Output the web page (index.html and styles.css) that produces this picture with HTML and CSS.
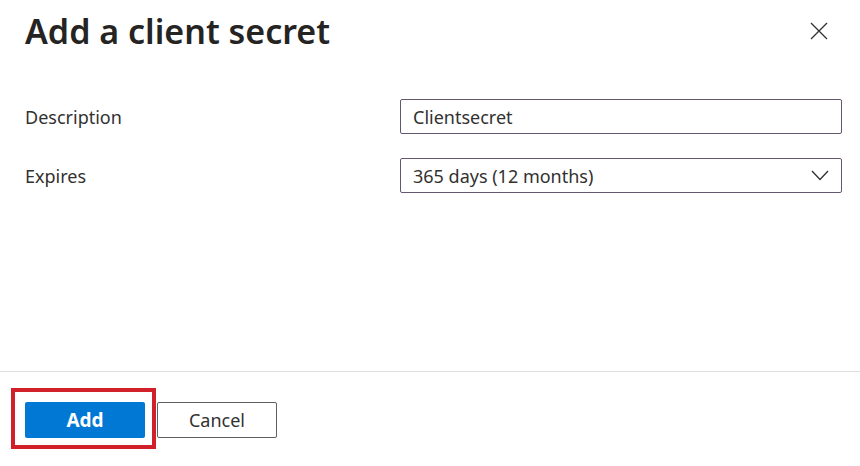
FILE: index.html
```html
<!DOCTYPE html>
<html lang="en">
<head>
  <meta charset="UTF-8">
  <title>Add a client secret</title>
  <link rel="stylesheet" href="styles.css">
</head>
<body>
  <div class="panel">
    <div class="panel-header">
      <h1>Add a client secret</h1>
      <button class="close-btn" aria-label="Close">
        <svg width="18" height="18" viewBox="0 0 18 18">
          <path d="M1 1 L17 17 M17 1 L1 17" stroke="#323130" stroke-width="1.3" fill="none"/>
        </svg>
      </button>
    </div>

    <div class="form">
      <label class="form-label" for="desc">Description</label>
      <input type="text" id="desc" class="field" value="Clientsecret">

      <label class="form-label" for="expires">Expires</label>
      <div class="field select">
        <span>365 days (12 months)</span>
        <svg width="18" height="11" viewBox="0 0 18 11">
          <path d="M1 1 L9 9.5 L17 1" stroke="#323130" stroke-width="1.3" fill="none"/>
        </svg>
      </div>
    </div>

    <div class="panel-footer">
      <div class="highlight">
        <button class="btn btn-primary">Add</button>
      </div>
      <button class="btn btn-default">Cancel</button>
    </div>
  </div>
</body>
</html>
```

FILE: styles.css
```css
:root {
  --text: #323130;
  --accent: #0078d4;
  --field-border: #65576f;
  --divider: #e1dfdd;
}

* {
  box-sizing: border-box;
}

body {
  margin: 0;
  background: #fff;
  color: var(--text);
  font-family: "Noto Sans", "Open Sans", sans-serif;
}

.panel {
  width: 860px;
  height: 466px;
  display: flex;
  flex-direction: column;
}

.panel-header {
  display: flex;
  align-items: center;
  justify-content: space-between;
  padding: 6px 25px 0 25px;
  height: 56px;
}

h1 {
  margin: 0;
  font-size: 34px;
  font-weight: 600;
  color: #252423;
}

.close-btn {
  background: none;
  border: none;
  padding: 0;
  margin-right: 7px;
  margin-top: 0;
  width: 18px;
  height: 18px;
  cursor: pointer;
}

.close-btn svg {
  display: block;
}

.form {
  display: grid;
  grid-template-columns: 375px 442px;
  grid-auto-rows: 35px;
  row-gap: 24px;
  align-items: center;
  padding: 43px 25px 0 25px;
  flex: 1;
  align-content: start;
}

.form-label {
  font-size: 18px;
}

.field {
  height: 35px;
  width: 100%;
  border: 1px solid var(--field-border);
  border-radius: 2px;
  padding: 0 12px;
  font-family: inherit;
  font-size: 18px;
  color: var(--text);
  background: #fff;
}

.select {
  display: flex;
  align-items: center;
  justify-content: space-between;
}

.select svg {
  display: block;
}

.panel-footer {
  border-top: 1px solid var(--divider);
  display: flex;
  align-items: flex-start;
  padding: 16px 0 17px 11px;
}

.highlight {
  border: 4px solid #d0202a;
  padding: 10px 7px 7px 10px;
}

.btn {
  width: 120px;
  height: 36px;
  border-radius: 2px;
  font-family: inherit;
  font-size: 18px;
  cursor: pointer;
}

.btn-primary {
  display: block;
  background: var(--accent);
  border: none;
  color: #fff;
  font-weight: 700;
  font-size: 19px;
}

.btn-default {
  margin-left: 1px;
  margin-top: 14px;
  background: #fff;
  border: 1px solid #605e5c;
  color: var(--text);
}
```
